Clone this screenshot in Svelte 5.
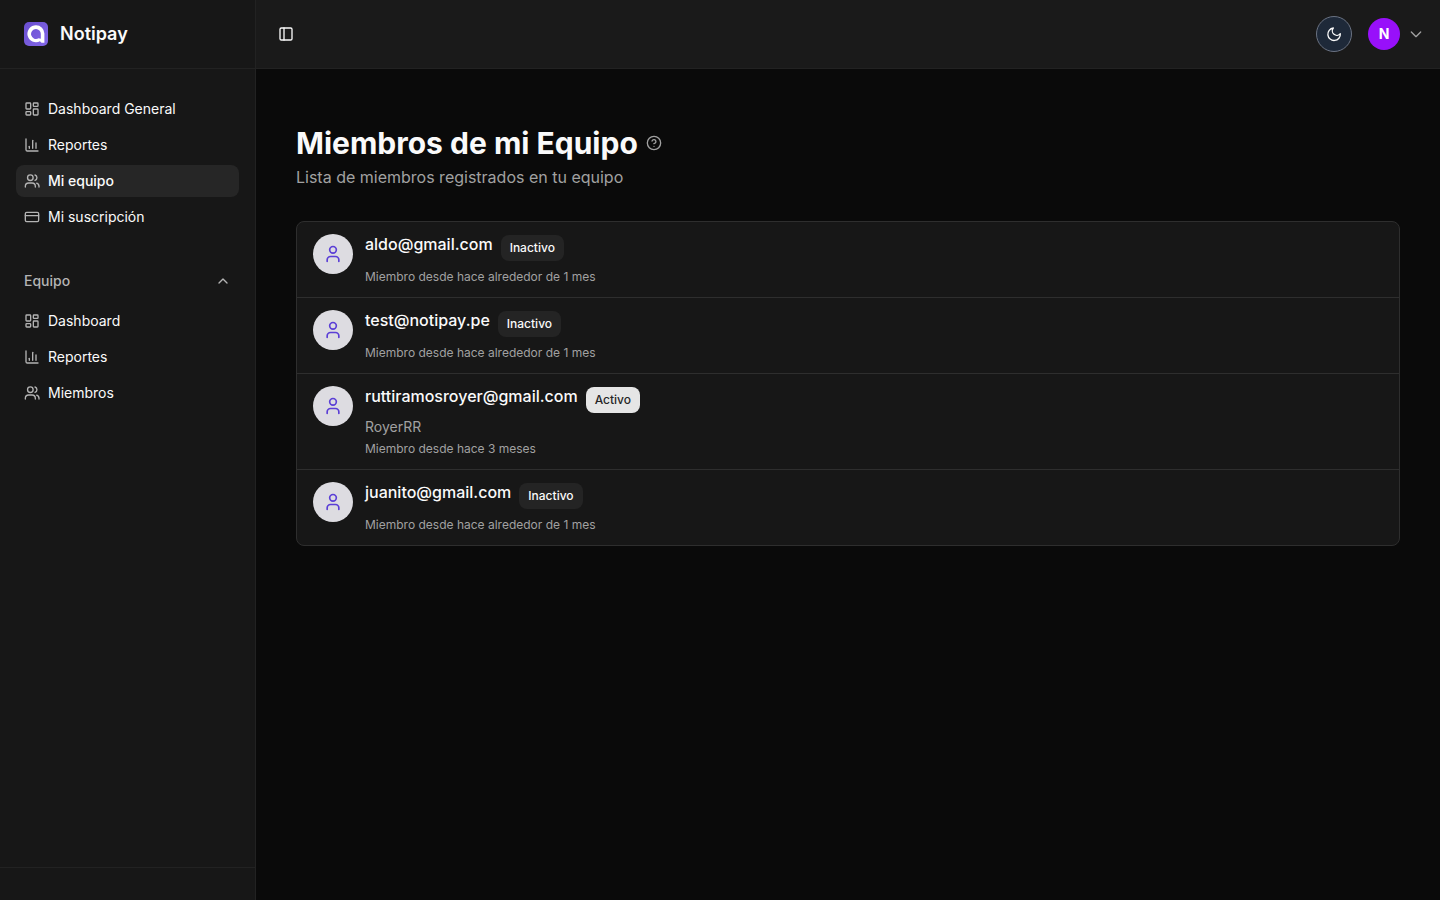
<script lang="ts">
  interface Member {
    email: string;
    name?: string;
    since: string;
    active: boolean;
  }

  const mainNav = [
    { label: 'Dashboard General', icon: 'dashboard' },
    { label: 'Reportes', icon: 'chart' },
    { label: 'Mi equipo', icon: 'users' },
    { label: 'Mi suscripción', icon: 'card' },
  ];

  const teamNav = [
    { label: 'Dashboard', icon: 'dashboard' },
    { label: 'Reportes', icon: 'chart' },
    { label: 'Miembros', icon: 'users' },
  ];

  const members: Member[] = [
    { email: 'aldo@gmail.com', since: 'alrededor de 1 mes', active: false },
    { email: 'test@notipay.pe', since: 'alrededor de 1 mes', active: false },
    { email: 'ruttiramosroyer@gmail.com', name: 'RoyerRR', since: '3 meses', active: true },
    { email: 'juanito@gmail.com', since: 'alrededor de 1 mes', active: false },
  ];

  let current = $state('Mi equipo');
  let teamOpen = $state(true);
  let sidebarOpen = $state(true);
</script>

{#snippet icon(name: string)}
  <svg class="icon" viewBox="0 0 24 24" aria-hidden="true">
    {#if name === 'dashboard'}
      <rect width="7" height="9" x="3" y="3" rx="1" />
      <rect width="7" height="5" x="14" y="3" rx="1" />
      <rect width="7" height="9" x="14" y="12" rx="1" />
      <rect width="7" height="5" x="3" y="16" rx="1" />
    {:else if name === 'chart'}
      <path d="M3 3v16a2 2 0 0 0 2 2h16" />
      <path d="M13 17V5" />
      <path d="M18 17V9" />
      <path d="M8 17v-3" />
    {:else if name === 'users'}
      <path d="M2 21v-1a5 5 0 0 1 5-5h5a5 5 0 0 1 5 5v1" />
      <circle cx="9.5" cy="7" r="4.2" />
      <path d="M22.500 21v-1a5 5 0 0 0-3.500-4.800" />
      <path d="M16.500 3a4.200 4.200 0 0 1 0 8" />
    {:else if name === 'card'}
      <rect width="20" height="14" x="2" y="5" rx="2" />
      <path d="M2 10h20" />
    {:else if name === 'panel'}
      <rect width="18" height="18" x="3" y="3" rx="2" />
      <path d="M9 3v18" />
    {:else if name === 'moon'}
      <path d="M11 3a6.200 6.200 0 0 0 10.500 8.500A9.400 9.400 0 1 1 11 3Z" />
    {:else if name === 'help'}
      <circle cx="12" cy="12" r="10" />
      <path d="M9.090 9a3 3 0 0 1 5.830 1c0 2-3 3-3 3" />
      <path d="M12 17h.010" />
    {:else if name === 'user'}
      <path d="M19 21v-2a4 4 0 0 0-4-4H9a4 4 0 0 0-4 4v2" />
      <circle cx="12" cy="7" r="4" />
    {:else if name === 'up'}
      <path d="m18 15-6-6-6 6" />
    {:else if name === 'down'}
      <path d="m5 9 7 7 7-7" />
    {/if}
  </svg>
{/snippet}

{#snippet navList(items: { label: string; icon: string }[])}
  <ul class="nav-list">
    {#each items as item}
      <li>
        <a
          class="nav-link"
          class:active={item.label === current}
          href="#{item.icon}"
          onclick={() => (current = item.label)}
        >
          {@render icon(item.icon)}
          <span>{item.label}</span>
        </a>
      </li>
    {/each}
  </ul>
{/snippet}

<div class="layout">
  {#if sidebarOpen}
    <aside class="sidebar">
      <div class="brand">
        <svg class="logo" viewBox="0 0 24 24" aria-hidden="true">
          <defs>
            <linearGradient id="logo-bg" x1="0" y1="0" x2="1" y2="1">
              <stop offset="0" stop-color="#6a4fd0" />
              <stop offset="1" stop-color="#8367e8" />
            </linearGradient>
          </defs>
          <rect width="24" height="24" rx="5" fill="url(#logo-bg)" />
          <path
            fill="#fff"
            fill-rule="evenodd"
            d="M12 3.200A8.400 8.400 0 0 1 20.400 11.600V20.800H17.500L15.900 19.200A8.500 8.500 0 1 1 12 3.200ZM12 7A5 5 0 1 0 14.600 16.300L16.800 16.700V12A5 5 0 0 0 12 7Z"
          />
        </svg>
        <span>Notipay</span>
      </div>
      <nav class="nav">
        {@render navList(mainNav)}
        <div class="group">
          <button class="group-toggle" aria-expanded={teamOpen} onclick={() => (teamOpen = !teamOpen)}>
            <span>Equipo</span>
            {@render icon(teamOpen ? 'up' : 'down')}
          </button>
          {#if teamOpen}
            {@render navList(teamNav)}
          {/if}
        </div>
      </nav>
      <div class="sidebar-footer"></div>
    </aside>
  {/if}

  <div class="page">
    <header class="topbar">
      <button class="panel-toggle" aria-label="Alternar menú" onclick={() => (sidebarOpen = !sidebarOpen)}>
        {@render icon('panel')}
      </button>
      <div class="actions">
        <button class="theme" aria-label="Cambiar tema">{@render icon('moon')}</button>
        <button class="account" aria-label="Cuenta">
          <span class="initial">N</span>
          {@render icon('down')}
        </button>
      </div>
    </header>

    <main class="content">
      <div class="title-row">
        <h1>Miembros de mi Equipo</h1>
        <button class="help" aria-label="Ayuda">{@render icon('help')}</button>
      </div>
      <p class="subtitle">Lista de miembros registrados en tu equipo</p>

      <ul class="members">
        {#each members as member}
          <li class="member">
            <span class="avatar">{@render icon('user')}</span>
            <div class="info">
              <div class="heading">
                <span class="email">{member.email}</span>
                <span class="badge" class:on={member.active}>{member.active ? 'Activo' : 'Inactivo'}</span>
              </div>
              {#if member.name}
                <p class="name">{member.name}</p>
              {/if}
              <p class="since">Miembro desde hace {member.since}</p>
            </div>
          </li>
        {/each}
      </ul>
    </main>
  </div>
</div>

<style>
  :global(body) {
    background: #0a0a0a;
    color: #fafafa;
    font-family: Inter, sans-serif;
  }

  .layout {
    --panel: #171717;
    --line: #222222;
    --border: #2e2e2e;
    --muted: #a1a1a1;
    display: flex;
    min-height: 100vh;
  }

  button {
    font: inherit;
    color: inherit;
    background: none;
    border: none;
    padding: 0;
    cursor: pointer;
  }

  ul {
    list-style: none;
    margin: 0;
    padding: 0;
  }

  h1,
  p {
    margin: 0;
  }

  .icon {
    width: 16px;
    height: 16px;
    flex: none;
    fill: none;
    stroke: currentColor;
    stroke-width: 2;
    stroke-linecap: round;
    stroke-linejoin: round;
  }

  .sidebar {
    box-sizing: border-box;
    width: 256px;
    flex: none;
    display: flex;
    flex-direction: column;
    background: var(--panel);
    border-right: 1px solid var(--line);
  }

  .brand,
  .topbar {
    box-sizing: border-box;
    height: 69px;
    display: flex;
    align-items: center;
    border-bottom: 1px solid var(--line);
  }

  .brand {
    gap: 12px;
    padding: 0 24px;
    font-size: 18px;
    line-height: 28px;
    font-weight: 600;
  }

  .logo {
    width: 24px;
    height: 24px;
  }

  .nav {
    flex: 1;
    padding: 24px 16px;
  }

  .nav-list {
    display: flex;
    flex-direction: column;
    gap: 4px;
  }

  .nav-link {
    display: flex;
    align-items: center;
    gap: 8px;
    height: 32px;
    padding: 0 8px;
    border-radius: 8px;
    font-size: 14px;
    line-height: 20px;
    color: #fafafa;
    text-decoration: none;
  }

  .nav-link .icon {
    color: #b4b4b4;
  }

  .nav-link.active {
    background: #262626;
    font-weight: 500;
  }

  .group {
    margin-top: 32px;
  }

  .group-toggle {
    display: flex;
    align-items: center;
    justify-content: space-between;
    width: 100%;
    height: 32px;
    padding: 0 8px;
    margin-bottom: 8px;
    font-size: 14px;
    line-height: 20px;
    font-weight: 500;
    color: #b4b4b4;
  }

  .sidebar-footer {
    height: 32px;
    border-top: 1px solid var(--line);
  }

  .page {
    flex: 1;
    min-width: 0;
  }

  .topbar {
    justify-content: space-between;
    padding: 0 16px;
    background: #1a1a1a;
  }

  .panel-toggle {
    display: grid;
    place-items: center;
    width: 28px;
    height: 28px;
  }

  .actions,
  .account {
    display: flex;
    align-items: center;
  }

  .actions {
    gap: 16px;
  }

  .theme {
    box-sizing: border-box;
    display: grid;
    place-items: center;
    width: 36px;
    height: 36px;
    background: #1e2939;
    border: 1px solid #6a7282;
    border-radius: 50%;
  }

  .account {
    gap: 8px;
    color: var(--muted);
  }

  .initial {
    display: grid;
    place-items: center;
    width: 32px;
    height: 32px;
    border-radius: 50%;
    background: #9810fa;
    color: #ffffff;
    font-size: 14px;
    line-height: 20px;
    font-weight: 700;
  }

  .content {
    padding: 56px 40px;
  }

  .title-row {
    display: flex;
    align-items: center;
    gap: 8px;
  }

  h1 {
    font-size: 30px;
    line-height: 36px;
    font-weight: 700;
  }

  .help {
    display: flex;
    color: var(--muted);
  }

  .subtitle {
    margin-top: 4px;
    font-size: 16px;
    line-height: 24px;
    color: var(--muted);
  }

  .members {
    margin-top: 32px;
    background: var(--panel);
    border: 1px solid var(--border);
    border-radius: 8px;
  }

  .member {
    display: flex;
    gap: 12px;
    padding: 12px 16px;
  }

  .member + .member {
    border-top: 1px solid var(--border);
  }

  .avatar {
    display: grid;
    place-items: center;
    width: 40px;
    height: 40px;
    border-radius: 50%;
    background: #dddce1;
    color: #5b3fd6;
  }

  .avatar .icon {
    width: 20px;
    height: 20px;
  }

  .heading {
    display: flex;
    gap: 8px;
  }

  .email {
    font-size: 16px;
    line-height: 20px;
    font-weight: 500;
  }

  .badge {
    margin-top: 1px;
    padding: 4px 9px;
    border-radius: 8px;
    background: #242424;
    font-size: 12px;
    line-height: 18px;
    font-weight: 500;
  }

  .badge.on {
    background: #e5e5e5;
    color: #262626;
  }

  .name {
    margin-top: 4px;
    font-size: 14px;
    line-height: 20px;
    color: var(--muted);
  }

  .since {
    margin-top: 8px;
    font-size: 12px;
    line-height: 16px;
    color: var(--muted);
  }

  .name + .since {
    margin-top: 4px;
  }
</style>
